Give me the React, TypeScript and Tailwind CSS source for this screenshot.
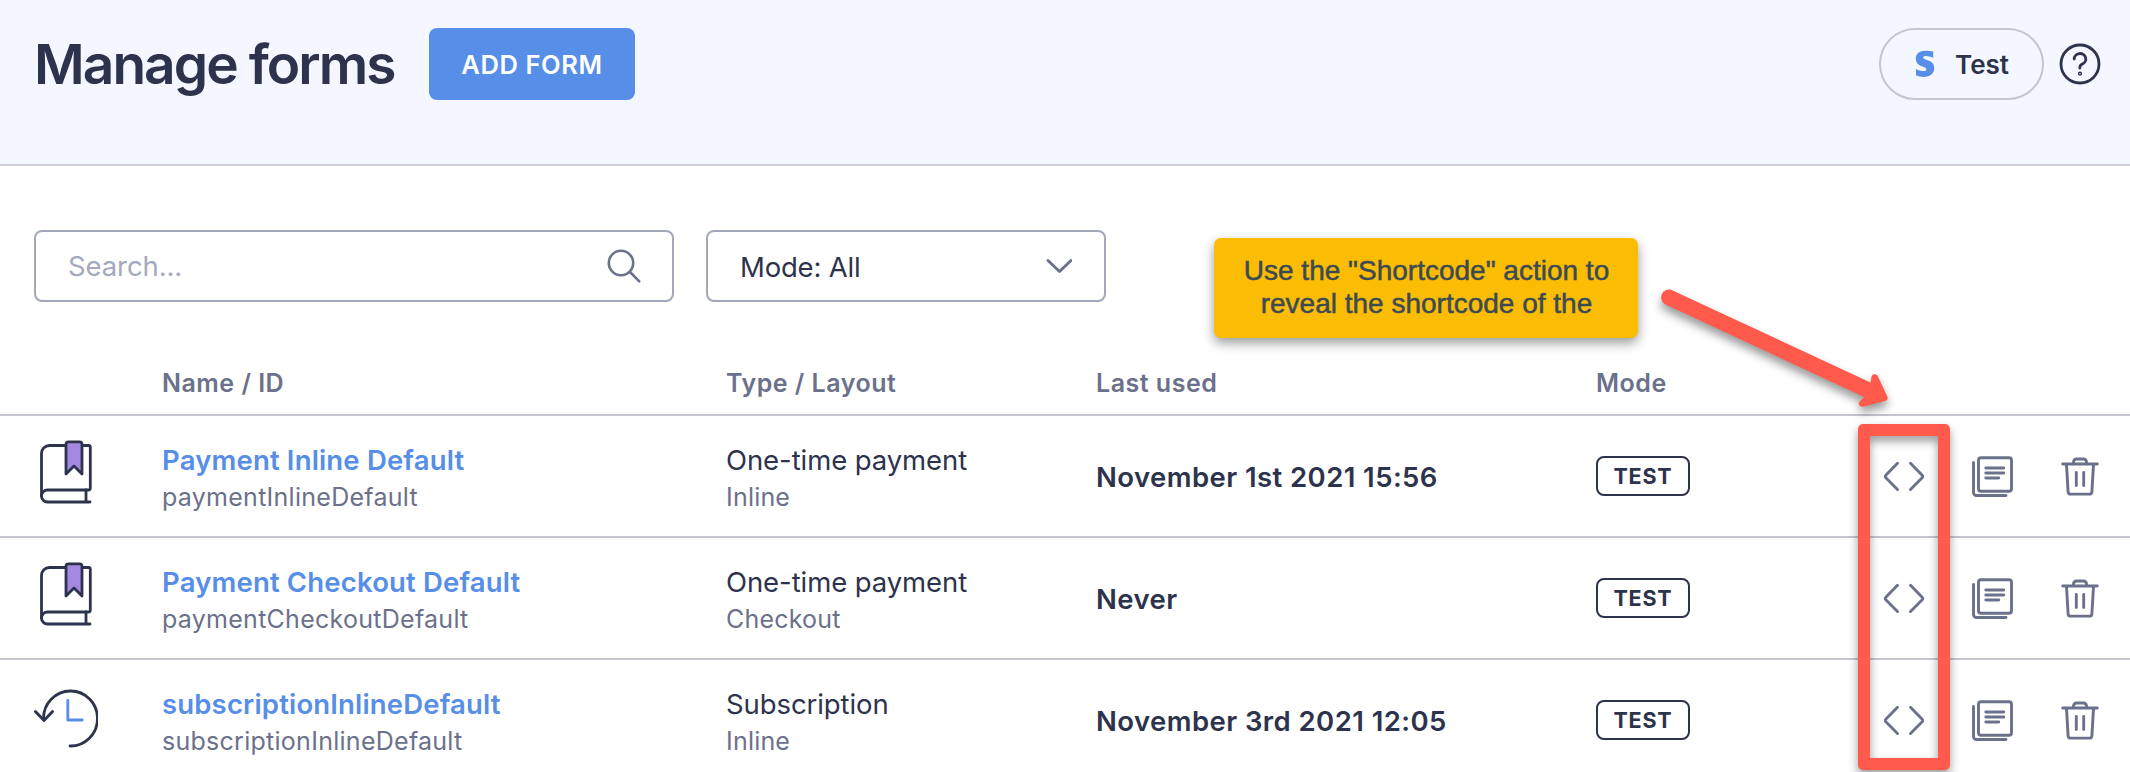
import { ReactNode } from 'react';

type FormKind = 'payment' | 'subscription';

type FormRow = {
  name: string;
  id: string;
  kind: FormKind;
  type: string;
  layout: string;
  lastUsed: string;
};

const forms: FormRow[] = [
  {
    name: 'Payment Inline Default',
    id: 'paymentInlineDefault',
    kind: 'payment',
    type: 'One-time payment',
    layout: 'Inline',
    lastUsed: 'November 1st 2021 15:56',
  },
  {
    name: 'Payment Checkout Default',
    id: 'paymentCheckoutDefault',
    kind: 'payment',
    type: 'One-time payment',
    layout: 'Checkout',
    lastUsed: 'Never',
  },
  {
    name: 'subscriptionInlineDefault',
    id: 'subscriptionInlineDefault',
    kind: 'subscription',
    type: 'Subscription',
    layout: 'Inline',
    lastUsed: 'November 3rd 2021 12:05',
  },
];

const columns =
  'grid grid-cols-[128px_564px_370px_500px_288px_1fr] pl-[34px]';

function BookIcon() {
  return (
    <svg
      className="w-16 h-16 mb-2"
      viewBox="0 0 64 64"
      fill="none"
      stroke="#2d334c"
      strokeWidth={2.8}
      strokeLinejoin="round"
      strokeLinecap="round"
    >
      <path d="M31 5.5H15.5a8 8 0 0 0-8 8v42.500a6 6 0 0 0 6 6H56" />
      <path d="M48 5.5h6.500a1.800 1.800 0 0 1 1.800 1.800V48a2 2 0 0 1-2 2H13.500a6 6 0 0 0-6 6" />
      <path d="M52 50v11.500" />
      <path
        d="M32 34V4.300a2.500 2.500 0 0 1 2.500-2.500h11a2.500 2.500 0 0 1 2.500 2.500V34l-8-8z"
        fill="#a389e0"
      />
    </svg>
  );
}

function HistoryIcon() {
  return (
    <svg
      className="w-16 h-16"
      viewBox="0 0 64 64"
      fill="none"
      strokeWidth={2.8}
      strokeLinejoin="round"
      strokeLinecap="round"
    >
      <path d="M9.500 31a27 27.500 0 1 1 26.500 27" stroke="#2d334c" />
      <path d="M1.500 23.500l8.500 9 8.500-9" stroke="#2d334c" />
      <path d="M33.800 12.500v19.500h14.500" stroke="#568ee8" />
    </svg>
  );
}

function CodeIcon() {
  return (
    <svg
      className="w-12 h-12"
      viewBox="0 0 48 48"
      fill="none"
      stroke="currentColor"
      strokeWidth={2.9}
      strokeLinecap="round"
      strokeLinejoin="round"
    >
      <path d="M17.500 11.200L5.800 23.200a1.800 1.800 0 0 0 0 2.600L17.500 37.500" />
      <path d="M30.500 11.200l11.700 12a1.800 1.800 0 0 1 0 2.600L30.500 37.500" />
    </svg>
  );
}

function DuplicateIcon() {
  return (
    <svg
      className="w-12 h-12"
      viewBox="0 0 48 48"
      fill="none"
      stroke="currentColor"
      strokeWidth={2.9}
      strokeLinecap="round"
      strokeLinejoin="round"
    >
      <rect x="10.500" y="5.700" width="33" height="33.500" rx="2.500" />
      <path d="M5.500 10.500v30a3 3 0 0 0 3 3H38" />
      <path d="M17.800 16h18M17.800 21h18M17.800 26h13" />
    </svg>
  );
}

function TrashIcon() {
  return (
    <svg
      className="w-12 h-12"
      viewBox="0 0 48 48"
      fill="none"
      stroke="currentColor"
      strokeWidth={2.9}
      strokeLinecap="round"
      strokeLinejoin="round"
    >
      <path d="M6.700 12h34.600" />
      <path d="M17.500 11.500v-1.500a3 3 0 0 1 3-3h7a3 3 0 0 1 3 3v1.500" />
      <path d="M10.500 12.500l1.600 27.300a2.500 2.500 0 0 0 2.500 2.300h18.800a2.500 2.500 0 0 0 2.500-2.300L37.500 12.500" />
      <path d="M20.300 20.500v13M27.700 20.500v13" />
    </svg>
  );
}

function HelpIcon() {
  return (
    <svg
      className="w-[42px] h-[42px]"
      viewBox="0 0 42 42"
      fill="none"
      stroke="#2d334c"
      strokeWidth={2.8}
      strokeLinecap="round"
    >
      <circle cx="21" cy="21" r="19" />
      <path d="M15.200 16a5.800 5.500 0 1 1 8 5.100c-1.700.8-2.400 1.700-2.400 4" />
      <circle cx="21" cy="30.700" r="1.400" strokeWidth={1.4} />
    </svg>
  );
}

function IconButton({ label, children }: { label: string; children: ReactNode }) {
  return (
    <button aria-label={label} className="text-[#6c718b]">
      {children}
    </button>
  );
}

function Header() {
  return (
    <header className="h-[166px] flex items-start justify-between pt-7 pl-[34px] pr-[29px] bg-[#f4f7ff] border-b-2 border-[#cccfda]">
      <div className="flex items-center">
        <h1 className="w-[395px] text-[55px] leading-[72px] font-semibold tracking-[-1.95px] whitespace-nowrap">
          Manage forms
        </h1>
        <button className="w-[206px] h-[72px] pt-0.5 rounded-lg bg-[#568ee8] text-white text-[25.5px] font-semibold tracking-[0.6px]">
          ADD FORM
        </button>
      </div>
      <div className="flex items-center gap-[15px]">
        <button className="w-[165px] h-[72px] flex items-center gap-5 pl-[34px] rounded-full border-2 border-[#c4c5cd] text-[26px] font-semibold">
          <svg className="w-5 h-7" viewBox="0 0 20 28" fill="#568ee8">
            <path d="M18.200 1.600v6.300C15.700 6.700 13.300 6 11 6c-1.800 0-2.900.6-2.900 1.600 0 3.100 11.200 1.800 11.200 10.400 0 5.700-4.300 8.900-10.600 8.900-2.600 0-5.100-.5-7.700-1.600v-6.400c2.400 1.300 5.200 2.200 7.500 2.200 1.800 0 2.900-.5 2.900-1.700C11.400 16 .8 17.400.8 8.600.8 3.800 4.600.8 10.500.8c2.500 0 5.100.1 7.700.8z" />
          </svg>
          Test
        </button>
        <HelpIcon />
      </div>
    </header>
  );
}

function Filters() {
  return (
    <div className="flex gap-8 pt-16 pl-[34px]">
      <div className="w-[640px] h-[72px] flex items-center justify-between pl-8 pr-[29px] rounded-lg border-2 border-[#a2a7bc] text-[27.5px] text-[#a4a9be]">
        <span className="pt-0.5 tracking-[-0.1px]">Search...</span>
        <svg
          className="w-[38px] h-[38px]"
          viewBox="0 0 38 38"
          fill="none"
          stroke="#6c718b"
          strokeWidth={2.6}
          strokeLinecap="round"
        >
          <circle cx="16" cy="16" r="12.200" />
          <path d="M25 25l9.300 9.300" />
        </svg>
      </div>
      <div className="w-[400px] h-[72px] flex items-center justify-between px-8 rounded-lg border-2 border-[#a2a7bc] text-[27.5px]">
        <span className="pt-[3px] tracking-[-0.2px]">Mode: All</span>
        <svg
          className="w-[26px] h-4"
          viewBox="0 0 26 16"
          fill="none"
          stroke="#6c718b"
          strokeWidth={2.9}
          strokeLinecap="round"
          strokeLinejoin="round"
        >
          <path d="M2 2.500l11.500 11L25 2.500" />
        </svg>
      </div>
    </div>
  );
}

function Row({ form }: { form: FormRow }) {
  return (
    <div className={`${columns} h-[122px] items-center border-t-2 border-[#c4c5cd]`}>
      <div>{form.kind === 'payment' ? <BookIcon /> : <HistoryIcon />}</div>
      <div className="pt-1">
        <a className="block text-[27.5px] leading-[38px] font-semibold tracking-[0.17px] text-[#568ee8]">{form.name}</a>
        <div className="text-[25px] leading-9 tracking-[0.27px] text-[#6c718b]">{form.id}</div>
      </div>
      <div className="pt-1">
        <div className="text-[27.5px] leading-[38px] tracking-[-0.08px]">{form.type}</div>
        <div className="text-[25px] leading-9 tracking-[0.2px] text-[#6c718b]">{form.layout}</div>
      </div>
      <div className="pt-[3px] text-[27.5px] font-semibold tracking-[0.43px]">{form.lastUsed}</div>
      <div>
        <span className="inline-flex w-[94px] h-10 items-center justify-center rounded-lg border-2 border-[#2d334c] text-[21.5px] font-bold tracking-[0.8px]">
          TEST
        </span>
      </div>
      <div className="flex gap-10 -ml-1">
        <IconButton label="Shortcode">
          <CodeIcon />
        </IconButton>
        <IconButton label="Duplicate">
          <DuplicateIcon />
        </IconButton>
        <IconButton label="Delete">
          <TrashIcon />
        </IconButton>
      </div>
    </div>
  );
}

function Annotations() {
  return (
    <>
      <div className="absolute left-[1214px] top-[238px] w-[424px] h-[100px] pt-4 pl-px rounded-[7px] bg-[#fbbc04] text-center font-['Liberation_Sans',Arial,sans-serif] text-[28px] leading-[33px] text-[#3c4a54] [-webkit-text-stroke:0.5px_#3c4a54] shadow-[0_5px_12px_rgba(0,0,0,0.4)]">
        Use the "Shortcode" action to
        <br />
        reveal the shortcode of the
      </div>
      <svg
        className="absolute left-[1640px] top-[260px] w-[300px] h-[180px] drop-shadow-[0_6px_5px_rgba(0,0,0,0.4)]"
        viewBox="0 0 300 180"
        fill="#ff5a4c"
      >
        <path d="M31 29.700L230.500 122.500L231.500 116.500Q233.500 112 237.500 115.500L247.500 137Q248.500 140 245 141L222.500 146.800Q218 146 219 142.500L224 137L24.500 44A8 8 0 0 1 31 29.700z" />
      </svg>
      <div className="absolute left-[1858px] top-[424px] w-[92px] h-[346px] rounded-[5px] border-[12px] border-[#ff5a4c] drop-shadow-[0_5px_5px_rgba(0,0,0,0.4)]" />
    </>
  );
}

export default function App() {
  return (
    <div className="relative w-[2130px] h-[772px] overflow-hidden bg-white text-[#2d334c] font-[Inter,sans-serif]">
      <Header />
      <Filters />
      <div className="pt-[60px]">
        <div className={`${columns} h-[52px] text-[25px] leading-[42px] font-semibold tracking-[0.5px] text-[#6c718b]`}>
          <div />
          <div>Name / ID</div>
          <div>Type / Layout</div>
          <div>Last used</div>
          <div>Mode</div>
        </div>
        {forms.map((form) => (
          <Row key={form.name} form={form} />
        ))}
      </div>
      <Annotations />
    </div>
  );
}
